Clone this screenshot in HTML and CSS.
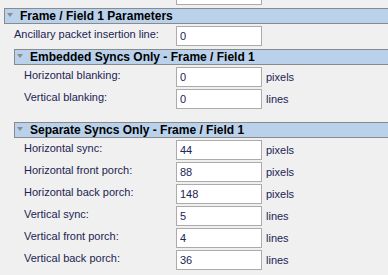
FILE: index.html
```html
<!DOCTYPE html>
<html lang="en">
  <head>
    <meta charset="UTF-8" />
    <title>Frame Parameters</title>
    <link rel="stylesheet" href="styles.css">
  </head>
  <body>
    <div class="panel">
      <div class="row stub">
        <span class="label"></span>
        <input class="field" type="text" value="" />
      </div>

      <section class="group">
        <div class="group-head"><span class="caret"></span>Frame / Field 1 Parameters</div>
        <div class="group-body">
          <div class="row">
            <span class="label">Ancillary packet insertion line:</span>
            <input class="field" type="text" value="0" />
          </div>

          <section class="group sub embedded">
            <div class="group-head"><span class="caret"></span>Embedded Syncs Only - Frame / Field 1</div>
            <div class="group-body">
              <div class="row">
                <span class="label">Horizontal blanking:</span>
                <input class="field" type="text" value="0" />
                <span class="unit">pixels</span>
              </div>
              <div class="row">
                <span class="label">Vertical blanking:</span>
                <input class="field" type="text" value="0" />
                <span class="unit">lines</span>
              </div>
            </div>
          </section>

          <section class="group sub">
            <div class="group-head"><span class="caret"></span>Separate Syncs Only - Frame / Field 1</div>
            <div class="group-body">
              <div class="row">
                <span class="label">Horizontal sync:</span>
                <input class="field" type="text" value="44" />
                <span class="unit">pixels</span>
              </div>
              <div class="row">
                <span class="label">Horizontal front porch:</span>
                <input class="field" type="text" value="88" />
                <span class="unit">pixels</span>
              </div>
              <div class="row">
                <span class="label">Horizontal back porch:</span>
                <input class="field" type="text" value="148" />
                <span class="unit">pixels</span>
              </div>
              <div class="row">
                <span class="label">Vertical sync:</span>
                <input class="field" type="text" value="5" />
                <span class="unit">lines</span>
              </div>
              <div class="row">
                <span class="label">Vertical front porch:</span>
                <input class="field" type="text" value="4" />
                <span class="unit">lines</span>
              </div>
              <div class="row">
                <span class="label">Vertical back porch:</span>
                <input class="field" type="text" value="36" />
                <span class="unit">lines</span>
              </div>
            </div>
          </section>
        </div>
      </section>
    </div>
  </body>
</html>
```

FILE: styles.css
```css
html,
body {
  margin: 0;
  padding: 0;
  overflow: hidden;
  background-color: #f0f0f0;
}

body {
  font-family: "Liberation Sans", Arial, sans-serif;
  font-size: 11px;
  color: #1b2452;
}

.panel {
  padding-left: 4px;
}

.row {
  display: flex;
  align-items: flex-start;
  height: 20px;
  margin-bottom: 2px;
}

.stub {
  margin-top: -15px;
  margin-bottom: 3px;
}

.label {
  width: 172px;
  padding-top: 2px;
  white-space: nowrap;
}

.group-body .label {
  padding-left: 10px;
  box-sizing: border-box;
  width: 172px;
}

.sub .group-body .label {
  width: 162px;
}

.field {
  width: 86px;
  height: 20px;
  box-sizing: border-box;
  margin: 0;
  padding: 0 3px;
  border: 1px solid #ababab;
  background-color: white;
  font-family: "Liberation Sans", Arial, sans-serif;
  font-size: 11px;
  color: #1b2452;
  outline: none;
}

.unit {
  margin-left: 4px;
  padding-top: 4px;
}

.group-head {
  display: flex;
  align-items: center;
  height: 16px;
  box-sizing: border-box;
  border: 1px solid #8a8a8a;
  border-right: none;
  background-color: #b9d1ea;
  font-weight: bold;
  font-size: 12px;
  color: #000;
  padding-left: 2px;
  white-space: nowrap;
}

.caret {
  width: 0;
  height: 0;
  border-left: 3px solid transparent;
  border-right: 3px solid transparent;
  border-top: 4px solid #8c8c8c;
  margin-right: 7px;
  margin-top: -2px;
}

.group-body {
  padding-top: 2px;
}

.sub {
  margin-left: 10px;
  margin-top: 3px;
}

.embedded {
  margin-bottom: 13px;
}
```
